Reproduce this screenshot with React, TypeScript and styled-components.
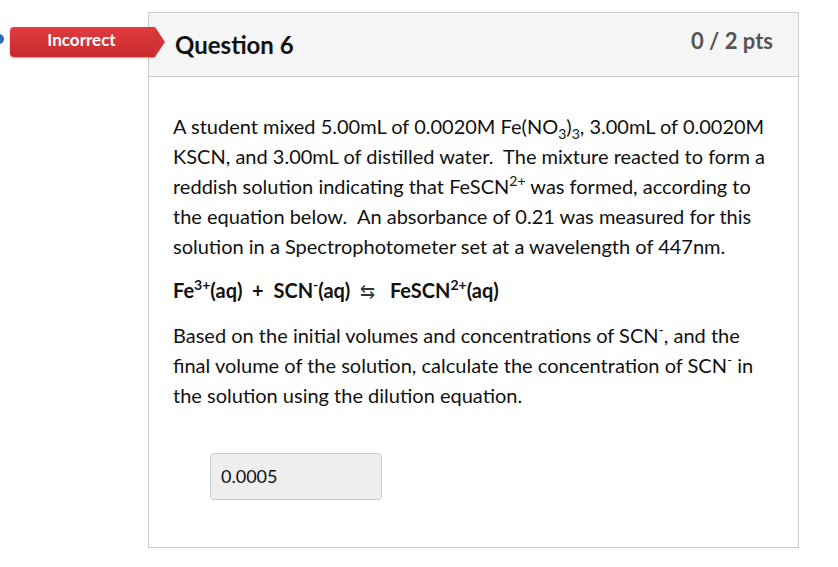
import styled, { createGlobalStyle } from "styled-components";

const GlobalStyle = createGlobalStyle`
  html, body {
    margin: 0;
    padding: 0;
    background: #ffffff;
  }
  body {
    font-family: Lato, "Liberation Sans", sans-serif;
    color: #2d3b45;
  }
`;

const App = () => {
  return (
    <>
      <GlobalStyle />
      <SPage>
        <SDot />
        <SBadge>Incorrect</SBadge>
        <SCard>
          <SHeader>
            <STitle>Question 6</STitle>
            <SPoints>0 / 2 pts</SPoints>
          </SHeader>
          <SBody>
            <SText>
              A student mixed 5.00mL of 0.0020M Fe(NO<sub>3</sub>)<sub>3</sub>,
              3.00mL of 0.0020M KSCN, and 3.00mL of distilled water.&nbsp; The
              mixture reacted to form a reddish solution indicating that FeSCN
              <sup>2+</sup> was formed, according to the equation below.&nbsp;
              An absorbance of 0.21 was measured for this solution in a
              Spectrophotometer set at a wavelength of 447nm.
            </SText>
            <SEquation>
              Fe<sup>3+</sup>(aq)&nbsp; +&nbsp; SCN<sup>-</sup>(aq)&nbsp;
              <SArrow>⇆</SArrow>&nbsp; FeSCN<sup>2+</sup>(aq)
            </SEquation>
            <SText>
              Based on the initial volumes and concentrations of SCN
              <sup>-</sup>, and the final volume of the solution, calculate the
              concentration of SCN<sup>-</sup> in the solution using the
              dilution equation.
            </SText>
            <SAnswer>0.0005</SAnswer>
          </SBody>
        </SCard>
      </SPage>
    </>
  );
};

export default App;

const SPage = styled.div`
  position: relative;
  width: 838px;
  height: 567px;
  padding: 12px 0 0 148px;
  box-sizing: border-box;
`;

const SCard = styled.div`
  width: 651px;
  height: 536px;
  box-sizing: border-box;
  border: 1px solid #c7cdd1;
  background: #ffffff;
  display: flex;
  flex-direction: column;
`;

const SHeader = styled.div`
  height: 64px;
  box-sizing: border-box;
  background: #f5f5f5;
  border-bottom: 1px solid #c7cdd1;
  display: flex;
  align-items: center;
  justify-content: space-between;
  padding: 0 25px 0 26px;
`;

const STitle = styled.h2`
  margin: 0;
  font-size: 24px;
  font-weight: 700;
  color: #111111;
`;

const SPoints = styled.div`
  font-size: 22px;
  font-weight: 700;
  color: #555555;
  margin-top: -8px;
`;

const SBody = styled.div`
  padding: 34px 26px 0 24px;
  color: #111111;
  font-size: 20px;
  line-height: 30px;

  sub,
  sup {
    font-size: 14px;
    line-height: 0;
  }
`;

const SText = styled.p`
  margin: 0 0 14px;
`;

const SEquation = styled.p`
  margin: 0 0 14px;
  font-weight: 700;
  font-size: 20px;
`;

const SArrow = styled.span`
  display: inline-block;
  margin: 0 5px;
  font-weight: 400;
  font-size: 18px;
  color: #333333;
`;

const SAnswer = styled.div`
  margin: 43px 0 0 37px;
  width: 172px;
  height: 47px;
  box-sizing: border-box;
  background: #eeeeee;
  border: 1px solid #c7cdd1;
  border-radius: 4px;
  font-size: 18px;
  line-height: 45px;
  padding-left: 10px;
  color: #111111;
`;

const SBadge = styled.div`
  position: absolute;
  left: 10px;
  top: 27px;
  width: 145px;
  height: 30px;
  box-sizing: border-box;
  background: linear-gradient(#e23c40, #c52a2e);
  border-radius: 4px 0 0 4px;
  box-shadow: 0 1px 2px rgba(0, 0, 0, 0.35);
  color: #ffffff;
  font-size: 17px;
  font-weight: 700;
  line-height: 26px;
  text-align: center;
  padding-right: 2px;

  &::after {
    content: "";
    position: absolute;
    right: -10px;
    top: 0;
    border-top: 15px solid transparent;
    border-bottom: 15px solid transparent;
    border-left: 10px solid #d33438;
  }
`;

const SDot = styled.div`
  position: absolute;
  left: -6px;
  top: 34px;
  width: 10px;
  height: 10px;
  border-radius: 50%;
  background: #2a6fbf;
`;
